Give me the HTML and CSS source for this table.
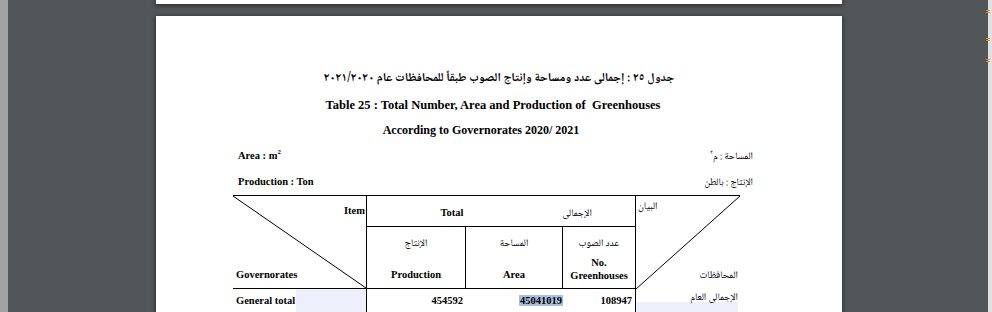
FILE: index.html
```html
<!DOCTYPE html>
<html lang="ar">
<head>
<meta charset="utf-8">
<title>Table 25</title>
<link rel="stylesheet" href="styles.css">
</head>
<body>
<div class="viewer">
  <div class="edge-left"></div>
  <main class="doc">
    <div class="page page-prev"></div>
    <section class="page page-main">
      <p class="title-ar" dir="rtl">جدول ٢٥ : إجمالى عدد ومساحة وإنتاج الصوب طبقاً للمحافظات عام ٢٠٢١/٢٠٢٠</p>
      <p class="title-en t1" dir="ltr">Table 25 : Total Number, Area and Production of&nbsp; Greenhouses</p>
      <p class="title-en t2" dir="ltr">According to Governorates 2020/ 2021</p>
      <div class="units" dir="ltr">
        <span class="unit-en">Area : m<sup>2</sup></span>
        <span class="unit-ar" dir="rtl">المساحة : م<sup>٢</sup></span>
      </div>
      <div class="units u2" dir="ltr">
        <span class="unit-en">Production : Ton</span>
        <span class="unit-ar" dir="rtl">الإنتاج : بالطن</span>
      </div>
      <div class="grid" dir="ltr">
        <div class="cell corner-l">
          <svg class="diag" aria-hidden="true"><line x1="0" y1="0" x2="100%" y2="100%"/></svg>
          <span class="item">Item</span>
          <span class="gov">Governorates</span>
        </div>
        <div class="cell total">
          <span class="total-en">Total</span>
          <span class="total-ar ar" dir="rtl">الإجمالى</span>
        </div>
        <div class="cell corner-r">
          <svg class="diag" aria-hidden="true"><line x1="0" y1="100%" x2="100%" y2="0"/></svg>
          <span class="ar bayan" dir="rtl">البيان</span>
          <span class="ar gov-ar" dir="rtl">المحافظات</span>
        </div>
        <div class="cell sub">
          <span class="ar" dir="rtl">الإنتاج</span>
          <span class="en">Production</span>
        </div>
        <div class="cell sub">
          <span class="ar" dir="rtl">المساحة</span>
          <span class="en">Area</span>
        </div>
        <div class="cell sub last">
          <span class="ar" dir="rtl">عدد الصوب</span>
          <span class="en two">No.<br>Greenhouses</span>
        </div>
        <div class="cell data d-label">General total</div>
        <div class="cell data d-num">454592</div>
        <div class="cell data d-num d-sel"><span class="sel">45041019</span></div>
        <div class="cell data d-num d-last">108947</div>
        <div class="cell data d-ar ar" dir="rtl">الإجمالى العام</div>
      </div>
    </section>
  </main>
  <div class="edge-right">
    <span class="mark"></span>
    <span class="mark"></span>
    <span class="mark"></span>
  </div>
</div>
</body>
</html>
```

FILE: styles.css
```css
html, body {
  margin: 0;
  padding: 0;
}
body {
  background: #525659;
  font-family: "Liberation Serif", "Times New Roman", serif;
  color: #000;
  overflow: hidden;
}
.viewer {
  display: flex;
  height: 312px;
  overflow: hidden;
}
.edge-left {
  flex: none;
  width: 8px;
  background: #a2a2a2;
}
.doc {
  flex: 1;
  display: flex;
  flex-direction: column;
  align-items: flex-start;
  padding-left: 148px;
}
.page {
  flex: none;
  width: 686px;
  background: #fff;
  box-shadow: 0 1px 4px 1px rgba(0, 0, 0, 0.4);
}
.page-prev {
  height: 4px;
}
.page-main {
  margin-top: 12px;
  height: 420px;
  padding-top: 53px;
  box-sizing: border-box;
}
.edge-right {
  flex: none;
  width: 7px;
  background: linear-gradient(to right, #525659 3px, #e2e2e2 3px);
  display: flex;
  flex-direction: column;
  align-items: flex-start;
}
.mark {
  display: block;
  width: 4px;
  height: 1px;
  margin-left: 1px;
  border-top: 1px solid #d39226;
  border-bottom: 1px solid #d39226;
}
.mark:nth-child(1) { margin-top: 10px; }
.mark:nth-child(2) { margin-top: 25px; }
.mark:nth-child(3) { margin-top: 18px; }

.ar,
.title-ar,
.unit-ar {
  font-family: "Noto Naskh Arabic", "DejaVu Sans", sans-serif;
}
p {
  margin: 0;
}
.title-ar {
  font-size: 12px;
  font-weight: bold;
  line-height: 20px;
  text-align: center;
}
.title-en {
  font-weight: bold;
  line-height: 20px;
  text-align: center;
}
.t1 {
  margin-top: 6px;
  font-size: 12.5px;
  padding-right: 12px;
}
.t2 {
  margin-top: 5px;
  font-size: 12px;
  padding-right: 36px;
}
.units {
  display: flex;
  justify-content: space-between;
  align-items: baseline;
  width: 515px;
  margin-left: 82px;
  margin-top: 6px;
  line-height: 20px;
}
.units.u2 {
  margin-top: 5px;
}
.unit-en {
  font-size: 10.5px;
  font-weight: bold;
}
.unit-ar {
  font-size: 10px;
}
sup {
  font-size: 65%;
  line-height: 0;
  vertical-align: 5px;
}

.grid {
  margin-left: 77px;
  margin-top: 2px;
  width: 507px;
  display: grid;
  grid-template-columns: 134px 99px 97px 73px 104px;
  grid-template-rows: 31px 62px 30px;
  border-top: 1px solid #000;
  font-size: 10.5px;
  font-weight: bold;
  line-height: 14px;
}
.cell {
  box-sizing: border-box;
  min-width: 0;
}
.corner-l {
  grid-column: 1;
  grid-row: 1 / 3;
  position: relative;
  border-right: 1px solid #000;
  border-bottom: 1px solid #000;
  display: flex;
  flex-direction: column;
  justify-content: space-between;
  padding: 8px 1px 6px 3px;
}
.corner-l .item {
  align-self: flex-end;
}
.corner-l .gov {
  align-self: flex-start;
}
.diag {
  position: absolute;
  left: 0;
  top: 0;
  width: 100%;
  height: 100%;
  overflow: visible;
}
.diag line {
  stroke: #000;
  stroke-width: 1;
}
.total {
  grid-column: 2 / 5;
  grid-row: 1;
  border-right: 1px solid #000;
  border-bottom: 1px solid #000;
  display: flex;
  align-items: baseline;
  padding-top: 10px;
}
.total-en {
  width: 170px;
  text-align: center;
}
.total-ar {
  width: 80px;
  text-align: center;
  font-weight: normal;
  font-size: 10px;
}
.corner-r {
  grid-column: 5;
  grid-row: 1 / 3;
  position: relative;
  display: flex;
  flex-direction: column;
  justify-content: space-between;
  padding: 4px 2px 6px 2px;
}
.corner-r .bayan {
  align-self: flex-start;
}
.corner-r .gov-ar {
  align-self: flex-end;
}
.corner-r .ar,
.sub .ar,
.d-ar {
  font-weight: normal;
  font-size: 10px;
}
.sub {
  grid-row: 2;
  border-right: 1px solid #000;
  border-bottom: 1px solid #000;
  display: flex;
  flex-direction: column;
  align-items: center;
  justify-content: space-between;
  padding: 10px 0 6px;
  text-align: center;
}
.sub .two {
  line-height: 13px;
}
.data {
  grid-row: 3;
  padding-top: 5px;
}
.d-label {
  border-right: 1px solid #000;
  padding-left: 3px;
  background: linear-gradient(#edf0fb, #edf0fb) no-repeat 63px 0 / 70px 100%;
}
.d-num {
  text-align: right;
  padding-right: 3px;
}
.d-sel {
  padding-right: 0;
}
.sel {
  background: #a8bfdc;
  padding: 0 1px;
}
.d-last {
  border-right: 1px solid #000;
}
.d-ar {
  text-align: right;
  padding-right: 2px;
  padding-top: 2px;
  background: linear-gradient(#edf0fb, #edf0fb) no-repeat 0 13px / 102px 100%;
}
```
